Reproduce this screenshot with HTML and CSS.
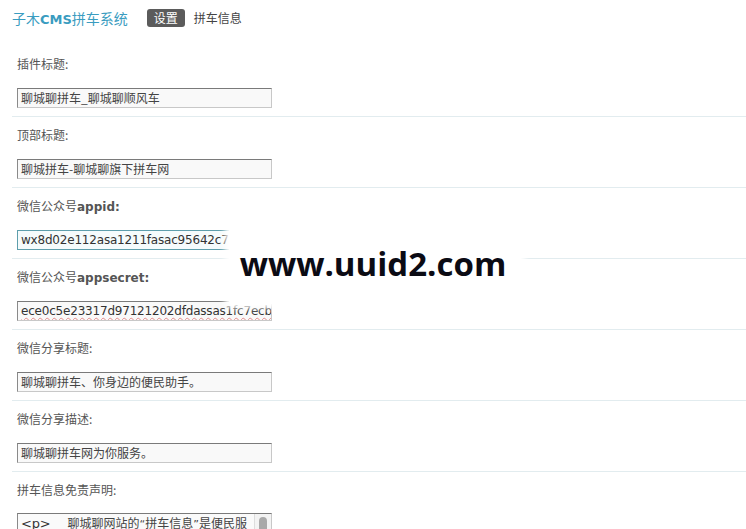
FILE: index.html
```html
<!DOCTYPE html>
<html lang="zh-CN">
<head>
<meta charset="utf-8">
<title>子木CMS拼车系统</title>
<link rel="stylesheet" href="styles.css">
</head>
<body>
<header class="topbar">
  <span class="brand">子木<b>CMS</b>拼车系统</span>
  <span class="tab active">设置</span>
  <span class="tab">拼车信息</span>
</header>
<main class="form">
  <section class="row">
    <div class="label">插件标题:</div>
    <div class="field">聊城聊拼车_聊城聊顺风车</div>
  </section>
  <section class="row">
    <div class="label">顶部标题:</div>
    <div class="field">聊城拼车-聊城聊旗下拼车网</div>
  </section>
  <section class="row">
    <div class="label">微信公众号<b>appid:</b></div>
    <div class="field focus latin">wx8d02e112asa1211fasac95642c7</div>
  </section>
  <section class="row">
    <div class="label">微信公众号<b>appsecret:</b></div>
    <div class="field latin"><span class="spell">ece0c5e23317d97121202dfdassas1fc7ecb</span></div>
  </section>
  <section class="row">
    <div class="label">微信分享标题:</div>
    <div class="field">聊城聊拼车、你身边的便民助手。</div>
  </section>
  <section class="row">
    <div class="label">微信分享描述:</div>
    <div class="field">聊城聊拼车网为你服务。</div>
  </section>
  <section class="row last">
    <div class="label">拼车信息免责声明:</div>
    <div class="textarea">
      <div class="ta-text"><span class="latin">&lt;p&gt;</span><span class="indent"></span>聊城聊网站的<span class="q">“</span>拼车信息<span class="q">”</span>是便民服</div>
      <div class="ta-scroll"><div class="thumb"></div></div>
    </div>
  </section>
</main>
<div class="watermark"><span>www.uuid2.com</span></div>
</body>
</html>
```
FILE: styles.css
```css
html, body {
  margin: 0;
  padding: 0;
  background: #fff;
  height: 529px;
  overflow: hidden;
}
body {
  font-family: "Noto Sans CJK SC", "DejaVu Sans", sans-serif;
  font-size: 12px;
  color: #555;
  position: relative;
}
.topbar {
  height: 46px;
  display: flex;
  align-items: flex-start;
  padding: 9px 0 0 12px;
  box-sizing: border-box;
}
.brand {
  font-size: 14px;
  line-height: 18px;
  color: #3a9cc0;
  margin-right: 19px;
}
.brand b {
  font-family: "DejaVu Sans", sans-serif;
  font-size: 13px;
  font-weight: bold;
}
.tab {
  font-size: 12px;
  line-height: 18px;
  padding: 0 5px;
  color: #444;
  border-radius: 3px;
  margin-right: 4px;
}
.tab.active {
  background: #5b5b5b;
  color: #fff;
  padding: 0 7px;
  margin-right: 4px;
}
.form {
  margin-left: 12px;
}
.row {
  padding: 11px 0 8px 5px;
  border-bottom: 1px solid #e2ecef;
  display: flex;
  flex-direction: column;
  align-items: flex-start;
  gap: 17px;
}
.row.last {
  border-bottom: none;
}
.label {
  line-height: 14px;
  height: 14px;
  color: #555;
}
.label b {
  font-family: "DejaVu Sans", sans-serif;
  font-size: 12px;
  font-weight: bold;
  color: #555;
}
.field {
  width: 255px;
  height: 20px;
  box-sizing: border-box;
  border: 1px solid #c8c8c8;
  border-top-color: #7a7a7a;
  border-left-color: #8a8a8a;
  background: #f9f9f9;
  padding: 0 3px;
  line-height: 18px;
  color: #444;
  white-space: nowrap;
  overflow: hidden;
}
.field.focus {
  border-color: #5e9eac;
  background: #f5fbfc;
}
.latin {
  font-family: "DejaVu Sans", sans-serif;
  font-size: 12px;
  letter-spacing: -0.2px;
  color: #333;
}
.spell {
  text-decoration: underline wavy #e48a8a;
  text-decoration-thickness: 1px;
  text-underline-offset: 2px;
}
.textarea {
  width: 255px;
  height: 60px;
  box-sizing: border-box;
  border: 1px solid #c8c8c8;
  border-top-color: #7a7a7a;
  border-left-color: #8a8a8a;
  background: #fafafa;
  display: flex;
  margin-top: -1px;
}
.ta-text {
  flex: 1;
  padding: 1px 3px;
  font-size: 12px;
  line-height: 16px;
  color: #444;
  white-space: nowrap;
  overflow: hidden;
}
.ta-text .latin {
  font-size: 13px;
}
.indent {
  display: inline-block;
  width: 17px;
}
.q {
  font-family: "DejaVu Sans", sans-serif;
  font-size: 11px;
}
.ta-scroll {
  width: 16px;
  border-left: 1px solid #ddd;
  background: #f3f3f3;
  display: flex;
  justify-content: center;
  padding-top: 3px;
}
.thumb {
  width: 8px;
  height: 40px;
  border-radius: 4px;
  background: #a9a9a9;
}
.watermark {
  position: absolute;
  left: 229px;
  top: 210px;
  width: 292px;
  height: 94px;
  background: #fff;
  box-shadow: 0 0 6px 4px #fff;
  display: flex;
  align-items: center;
  justify-content: center;
}
.watermark span {
  font-family: "Open Sans", "DejaVu Sans", sans-serif;
  font-weight: bold;
  font-size: 33px;
  color: #0b0b14;
  margin-top: 12px;
  margin-left: -4px;
}
```
